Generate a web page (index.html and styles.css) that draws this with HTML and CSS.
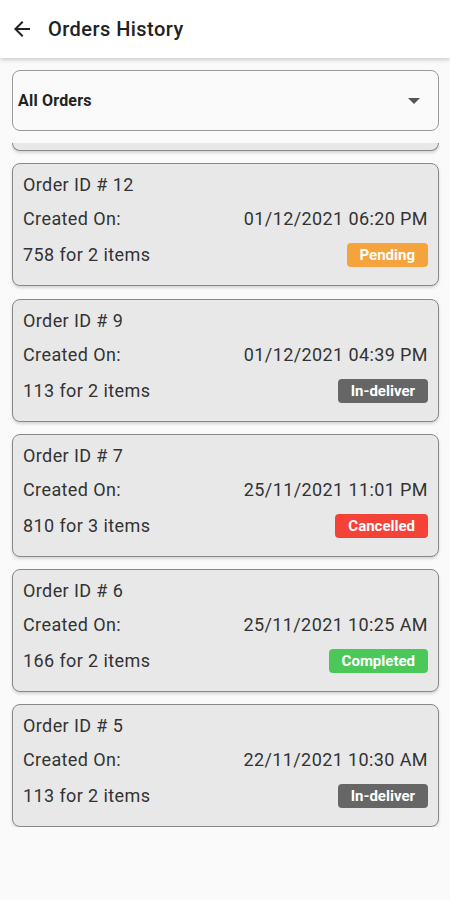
FILE: index.html
```html
<!DOCTYPE html>
<html lang="en">
<head>
    <meta charset="UTF-8">
    <meta name="viewport" content="width=device-width, initial-scale=1.0">
    <title>Orders History</title>
    <link rel="stylesheet" href="styles.css">
</head>
<body>
    <header class="app-bar">
        <svg class="back" width="24" height="24" viewBox="0 0 24 24">
            <path d="M20 11H7.83l5.59-5.59L12 4l-8 8 8 8 1.41-1.41L7.83 13H20v-2z" fill="#222"/>
        </svg>
        <h1>Orders History</h1>
    </header>

    <main class="content">
        <div class="select">
            <span>All Orders</span>
            <span class="caret"></span>
        </div>

        <div class="list">
            <div class="card-tail"></div>

            <div class="card">
                <div class="row">Order ID # 12</div>
                <div class="row"><span>Created On:</span><span>01/12/2021 06:20 PM</span></div>
                <div class="row"><span>758 for 2 items</span><span class="badge pending">Pending</span></div>
            </div>

            <div class="card">
                <div class="row">Order ID # 9</div>
                <div class="row"><span>Created On:</span><span>01/12/2021 04:39 PM</span></div>
                <div class="row"><span>113 for 2 items</span><span class="badge delivering">In-deliver</span></div>
            </div>

            <div class="card">
                <div class="row">Order ID # 7</div>
                <div class="row"><span>Created On:</span><span>25/11/2021 11:01 PM</span></div>
                <div class="row"><span>810 for 3 items</span><span class="badge cancelled">Cancelled</span></div>
            </div>

            <div class="card">
                <div class="row">Order ID # 6</div>
                <div class="row"><span>Created On:</span><span>25/11/2021 10:25 AM</span></div>
                <div class="row"><span>166 for 2 items</span><span class="badge completed">Completed</span></div>
            </div>

            <div class="card">
                <div class="row">Order ID # 5</div>
                <div class="row"><span>Created On:</span><span>22/11/2021 10:30 AM</span></div>
                <div class="row"><span>113 for 2 items</span><span class="badge delivering">In-deliver</span></div>
            </div>
        </div>
    </main>
</body>
</html>
```

FILE: styles.css
```css
* {
    box-sizing: border-box;
}
body {
    margin: 0;
    background: #fafafa;
    font-family: Roboto, "Noto Sans", sans-serif;
    color: #333;
}
.app-bar {
    height: 58px;
    background: #fff;
    display: flex;
    align-items: center;
    padding: 0 10px;
    gap: 14px;
    box-shadow: 0 2px 4px rgba(0, 0, 0, 0.18);
    position: relative;
}
.app-bar h1 {
    margin: 0;
    font-size: 20px;
    font-weight: 500;
    letter-spacing: 0.45px;
    color: #222;
}
.back {
    display: block;
}
.content {
    padding: 12px 11px 0 12px;
}
.select {
    height: 61px;
    border: 1px solid #9a9a9a;
    border-radius: 8px;
    background: #fafafa;
    display: flex;
    align-items: center;
    justify-content: space-between;
    padding: 0 18px 0 5px;
    font-size: 16px;
    font-weight: 700;
    letter-spacing: 0.2px;
    color: #222;
}
.caret {
    width: 0;
    height: 0;
    border-left: 6px solid transparent;
    border-right: 6px solid transparent;
    border-top: 6px solid #555;
}
.list {
    margin-top: 12px;
    display: flex;
    flex-direction: column;
    gap: 12.3px;
}
.card-tail {
    height: 8px;
    background: #e8e8e8;
    border: 1px solid #888;
    border-top: none;
    border-radius: 0 0 8px 8px;
    box-shadow: 0 2px 3px rgba(0, 0, 0, 0.15);
}
.card {
    background: #e8e8e8;
    border: 1px solid #888;
    border-radius: 8px;
    padding: 11px 10px 18px 10px;
    display: flex;
    flex-direction: column;
    gap: 14px;
    box-shadow: 0 2px 3px rgba(0, 0, 0, 0.15);
    font-size: 18px;
    letter-spacing: 0.4px;
}
.row {
    display: flex;
    justify-content: space-between;
    align-items: center;
    line-height: 20px;
}
.badge {
    height: 24px;
    line-height: 24px;
    padding: 0 13px;
    border-radius: 4px;
    color: #fff;
    font-size: 15px;
    font-weight: 700;
    letter-spacing: 0;
}
.pending {
    background: #f5a33c;
}
.delivering {
    background: #666;
}
.cancelled {
    background: #f44336;
}
.completed {
    background: #4cc85a;
}
```
